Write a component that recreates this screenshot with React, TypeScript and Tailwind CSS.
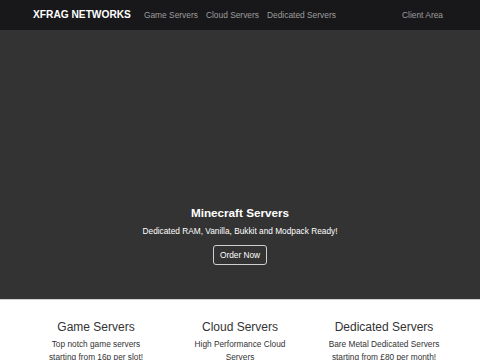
export default function App() {
  return (
    <div className="w-[480px] h-[360px] overflow-hidden bg-white" style={{ fontFamily: '"Liberation Sans", Arial, sans-serif' }}>
      <nav className="h-[30px] bg-[#18181a] flex items-center pl-[33px] pr-[37px]">
        <span className="text-white font-bold text-[10.2px] leading-none mr-[13px]">XFRAG NETWORKS</span>
        <div className="flex gap-[8px] text-[8.4px] text-[#9d9d9d] leading-none">
          <span>Game Servers</span>
          <span>Cloud Servers</span>
          <span>Dedicated Servers</span>
        </div>
        <span className="ml-auto text-[8.4px] text-[#9d9d9d] leading-none">Client Area</span>
      </nav>
      <section className="h-[269px] bg-[#333333] flex flex-col items-center justify-end pb-[34px]">
        <h1 className="text-white font-bold text-[11.7px] leading-none">Minecraft Servers</h1>
        <p className="text-white text-[8.3px] leading-none mt-[8px]">Dedicated RAM, Vanilla, Bukkit and Modpack Ready!</p>
        <button className="mt-[10px] h-[20px] px-[6px] border border-[#cfcfcf] rounded-[3px] text-white text-[8.3px] leading-none">Order Now</button>
      </section>
      <div className="h-px bg-[#d0d0d0]" />
      <section className="grid grid-cols-3 px-[24px] pt-[20px] text-[#333]">
        {[
          ["Game Servers", "Top notch game servers starting from 16p per slot!"],
          ["Cloud Servers", "High Performance Cloud Servers"],
          ["Dedicated Servers", "Bare Metal Dedicated Servers starting from £80 per month!"],
        ].map(([h, t]) => (
          <div key={h} className="px-[12px] text-center">
            <h2 className="text-[12px] leading-[14px]">{h}</h2>
            <p className="text-[8.3px] leading-[13px] mt-[4px] px-[2px]">{t}</p>
          </div>
        ))}
      </section>
    </div>
  );
}
